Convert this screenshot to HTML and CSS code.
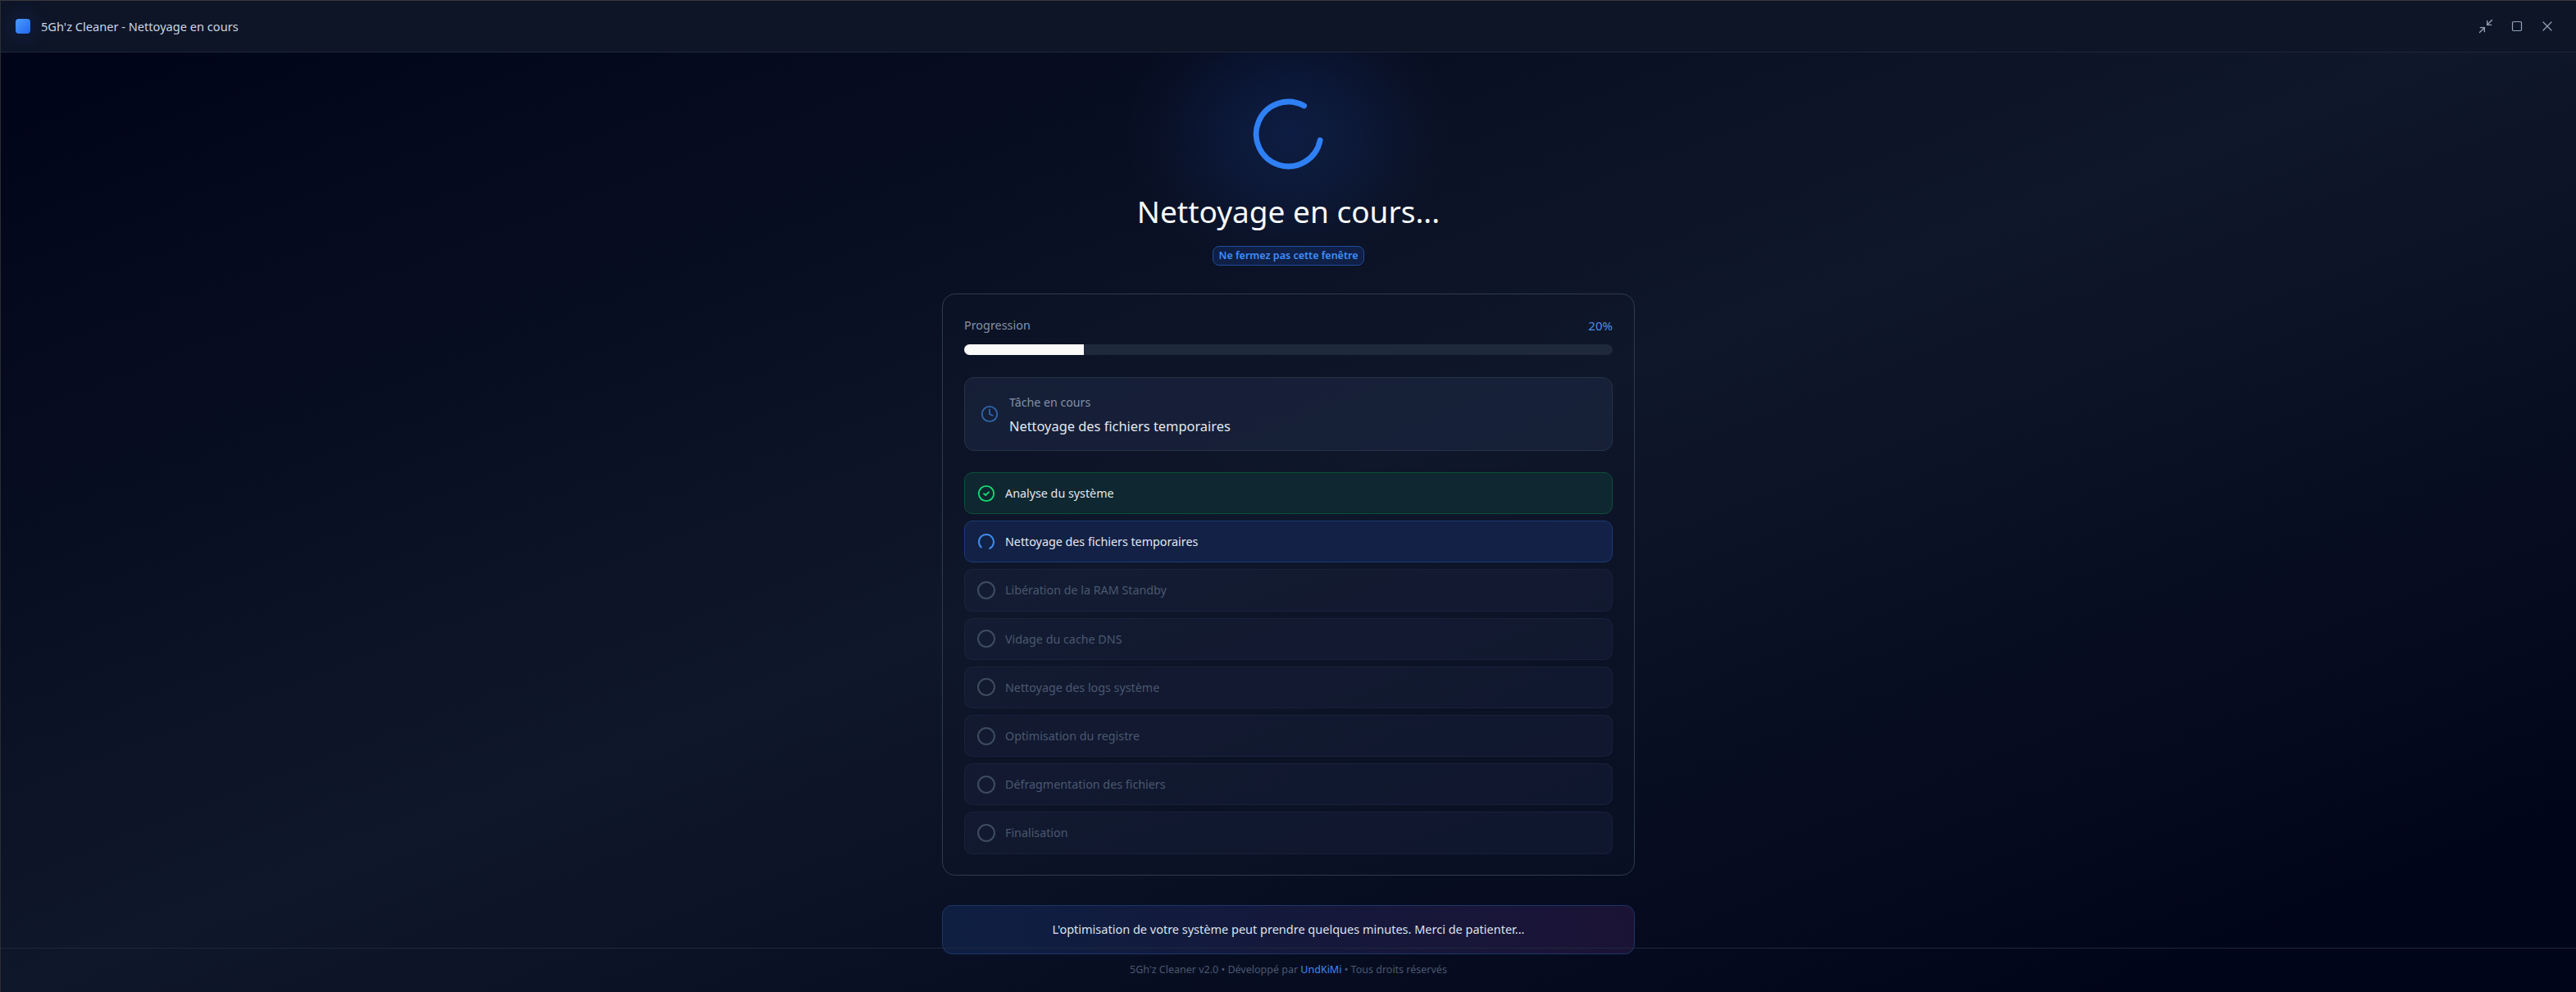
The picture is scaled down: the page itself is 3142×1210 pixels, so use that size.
FILE: index.html
```html
<!DOCTYPE html>
<html lang="fr">
<head>
  <meta charset="UTF-8">
  <title>5Gh'z Cleaner - Nettoyage en cours</title>
  <link rel="stylesheet" href="styles.css">
</head>
<body>
  <div class="window">
    <header class="titlebar">
      <div class="brand">
        <span class="logo"></span>
        <span class="app-title">5Gh'z Cleaner - Nettoyage en cours</span>
      </div>
      <div class="win-buttons">
        <span class="win-btn"><svg class="win-icon-lg" viewBox="0 0 24 24"><path d="M4 14h6v6"/><path d="M20 10h-6V4"/><path d="M14 10l7-7"/><path d="M3 21l7-7"/></svg></span>
        <span class="win-btn"><svg class="win-icon" viewBox="0 0 16 16"><rect x="2.5" y="2.5" width="11" height="11" rx="1.2"/></svg></span>
        <span class="win-btn"><svg class="win-icon" viewBox="0 0 16 16"><path d="M13 3 3 13"/><path d="m3 3 10 10"/></svg></span>
      </div>
    </header>

    <main class="content">
      <div class="spinner-wrap">
        <svg class="spinner" viewBox="0 0 24 24"><path d="M21 12a9 9 0 1 1-6.219-8.56"/></svg>
      </div>
      <h1>Nettoyage en cours...</h1>
      <span class="pill">Ne fermez pas cette fenêtre</span>

      <section class="card">
        <div class="progress-head">
          <span>Progression</span>
          <span class="percent">20%</span>
        </div>
        <div class="progress-track">
          <div class="progress-fill" style="width: 18.4%"></div>
        </div>

        <div class="task">
          <svg class="task-icon" viewBox="0 0 24 24"><circle cx="12" cy="12" r="10"/><path d="M12 6v6l4 2"/></svg>
          <div class="task-text">
            <div class="task-label">Tâche en cours</div>
            <div class="task-name">Nettoyage des fichiers temporaires</div>
          </div>
        </div>

        <ul class="steps">
          <li class="step done">
            <svg class="step-icon" viewBox="0 0 24 24"><circle cx="12" cy="12" r="10"/><path d="m8.8 12.2 2.2 2 4.2-4"/></svg>
            Analyse du système
          </li>
          <li class="step active">
            <svg class="step-icon" viewBox="0 0 24 24"><path class="loader" d="M21 12a9 9 0 1 1-6.219-8.56"/></svg>
            Nettoyage des fichiers temporaires
          </li>
          <li class="step">
            <svg class="step-icon" viewBox="0 0 24 24"><circle cx="12" cy="12" r="10"/></svg>
            Libération de la RAM Standby
          </li>
          <li class="step">
            <svg class="step-icon" viewBox="0 0 24 24"><circle cx="12" cy="12" r="10"/></svg>
            Vidage du cache DNS
          </li>
          <li class="step">
            <svg class="step-icon" viewBox="0 0 24 24"><circle cx="12" cy="12" r="10"/></svg>
            Nettoyage des logs système
          </li>
          <li class="step">
            <svg class="step-icon" viewBox="0 0 24 24"><circle cx="12" cy="12" r="10"/></svg>
            Optimisation du registre
          </li>
          <li class="step">
            <svg class="step-icon" viewBox="0 0 24 24"><circle cx="12" cy="12" r="10"/></svg>
            Défragmentation des fichiers
          </li>
          <li class="step">
            <svg class="step-icon" viewBox="0 0 24 24"><circle cx="12" cy="12" r="10"/></svg>
            Finalisation
          </li>
        </ul>
      </section>

      <div class="notice">L'optimisation de votre système peut prendre quelques minutes. Merci de patienter...</div>
    </main>

    <footer class="footer">
      5Gh'z Cleaner v2.0 • Développé par <span class="author">UndKiMi</span> • Tous droits réservés
    </footer>
  </div>
</body>
</html>
```

FILE: styles.css
```css
:root {
  --blue: #2f80f5;
  --text: #e2e8f0;
  --muted: #8391a8;
  --dim: #4a5870;
}

* {
  box-sizing: border-box;
}

html, body {
  margin: 0;
  height: 100%;
}

body {
  font-family: "Noto Sans", "Open Sans", sans-serif;
  background: #020617;
  color: var(--text);
}

svg {
  fill: none;
  stroke: currentColor;
  stroke-width: 2;
  stroke-linecap: round;
  stroke-linejoin: round;
}

.window {
  position: relative;
  height: 1210px;
  overflow: hidden;
  border-top: 1px solid #38393c;
  border-left: 1px solid #2a2d33;
  background: linear-gradient(to bottom right, #01051a 5%, #0f172a 50%, #01051a 92%);
}

.titlebar {
  position: relative;
  z-index: 1;
  height: 63px;
  display: flex;
  align-items: center;
  justify-content: space-between;
  padding: 0 16px 0 18px;
  background: #0e1527;
  border-bottom: 1px solid #1e293b;
}

.brand {
  display: flex;
  align-items: center;
  gap: 13px;
}

.logo {
  width: 18px;
  height: 18px;
  border-radius: 4px;
  background: linear-gradient(135deg, #4a9bff, #2468ee);
  box-shadow: 0 0 26px rgba(37, 99, 235, 0.3);
}

.app-title {
  font-size: 14.6px;
  color: #cbd5e1;
}

.win-buttons {
  display: flex;
  align-items: center;
  color: #94a3b8;
}

.win-btn {
  width: 37.5px;
  display: flex;
  justify-content: center;
}

.win-icon {
  width: 16px;
  height: 16px;
  stroke-width: 1.2;
}

.win-icon-lg {
  width: 20px;
  height: 20px;
  stroke-width: 1.6;
}

.content {
  display: flex;
  flex-direction: column;
  align-items: center;
  padding-top: 51px;
}

.spinner-wrap {
  position: relative;
  width: 96px;
  height: 96px;
}

.spinner-wrap::before {
  content: "";
  position: absolute;
  left: -152px;
  top: -122px;
  width: 400px;
  height: 340px;
  background: radial-gradient(closest-side, rgba(28, 78, 180, 0.22), rgba(28, 78, 180, 0.12) 45%, rgba(28, 78, 180, 0.03) 78%, transparent);
}

.spinner {
  position: relative;
  display: block;
  width: 105px;
  height: 105px;
  margin: -4.5px;
  color: var(--blue);
  stroke-width: 1.55;
  transform: rotate(11deg);
}

h1 {
  position: relative;
  margin: 22px 0 0;
  font-size: 37px;
  font-weight: 400;
  line-height: 50px;
  color: #f8fafc;
}

.pill {
  position: relative;
  margin-top: 17px;
  height: 24px;
  width: 185px;
  text-align: center;
  line-height: 22px;
  border: 1px solid #1e4c9c;
  border-radius: 8px;
  background: rgba(37, 99, 235, 0.16);
  color: #3f8ef9;
  font-size: 12.5px;
  font-weight: 600;
}

.card {
  width: 845px;
  height: 710px;
  margin-top: 34px;
  padding: 26px 26px 0;
  border: 1px solid #2c3a50;
  border-radius: 16px;
  background: rgba(15, 23, 42, 0.3);
}

.progress-head {
  display: flex;
  justify-content: space-between;
  font-size: 14.4px;
  line-height: 24px;
  color: var(--muted);
}

.percent {
  font-size: 15px;
  color: #4a8fe6;
}

.progress-track {
  height: 13px;
  margin-top: 11px;
  border-radius: 7px;
  overflow: hidden;
  background: #1e293b;
}

.progress-fill {
  height: 100%;
  background: #fafafa;
}

.task {
  display: flex;
  align-items: center;
  gap: 13px;
  height: 90px;
  margin-top: 27px;
  padding: 0 19px;
  border: 1px solid #263246;
  border-radius: 12px;
  background: rgba(30, 41, 70, 0.5);
}

.task-icon {
  width: 22px;
  height: 22px;
  color: #2e66ab;
}

.task-label {
  font-size: 14.2px;
  line-height: 24px;
  color: var(--muted);
}

.task-name {
  margin-top: 5px;
  font-size: 16.4px;
  line-height: 24px;
  color: var(--text);
}

.steps {
  list-style: none;
  margin: 26px 0 0;
  padding: 0;
  display: flex;
  flex-direction: column;
  gap: 8px;
}

.step {
  display: flex;
  align-items: center;
  gap: 11px;
  height: 51.2px;
  padding: 0 14px;
  font-size: 14.3px;
  color: var(--dim);
  border: 1px solid rgba(30, 41, 70, 0.6);
  border-radius: 10px;
  background: rgba(30, 41, 70, 0.3);
}

.step-icon {
  width: 24px;
  height: 24px;
  color: #3e4b60;
}

.step.done {
  color: var(--text);
  border-color: #0d5037;
  background: #0e2730;
}

.step.done .step-icon {
  color: #12dc72;
  transform: scale(0.92);
}

.step.active {
  color: var(--text);
  border-color: #1c3a76;
  background: #122145;
}

.step.active .step-icon {
  color: #3f8bed;
}

.loader {
  transform: rotate(134deg);
  transform-origin: 12px 12px;
}

.notice {
  width: 845px;
  height: 60px;
  margin-top: 36px;
  display: flex;
  align-items: center;
  justify-content: center;
  padding-bottom: 2px;
  font-size: 14.5px;
  color: #dbe2ec;
  border: 1px solid #1c3568;
  border-radius: 12px;
  background: linear-gradient(90deg, #0e1f42, #1b1336);
}

/* sits on top of the notice, the line crosses it */
.footer {
  position: absolute;
  left: 0;
  right: 0;
  bottom: 0;
  height: 54px;
  padding-top: 16px;
  text-align: center;
  font-size: 12.5px;
  line-height: 20px;
  color: var(--dim);
  border-top: 1px solid #1e293b;
}

.author {
  color: #3f8bed;
}
```
